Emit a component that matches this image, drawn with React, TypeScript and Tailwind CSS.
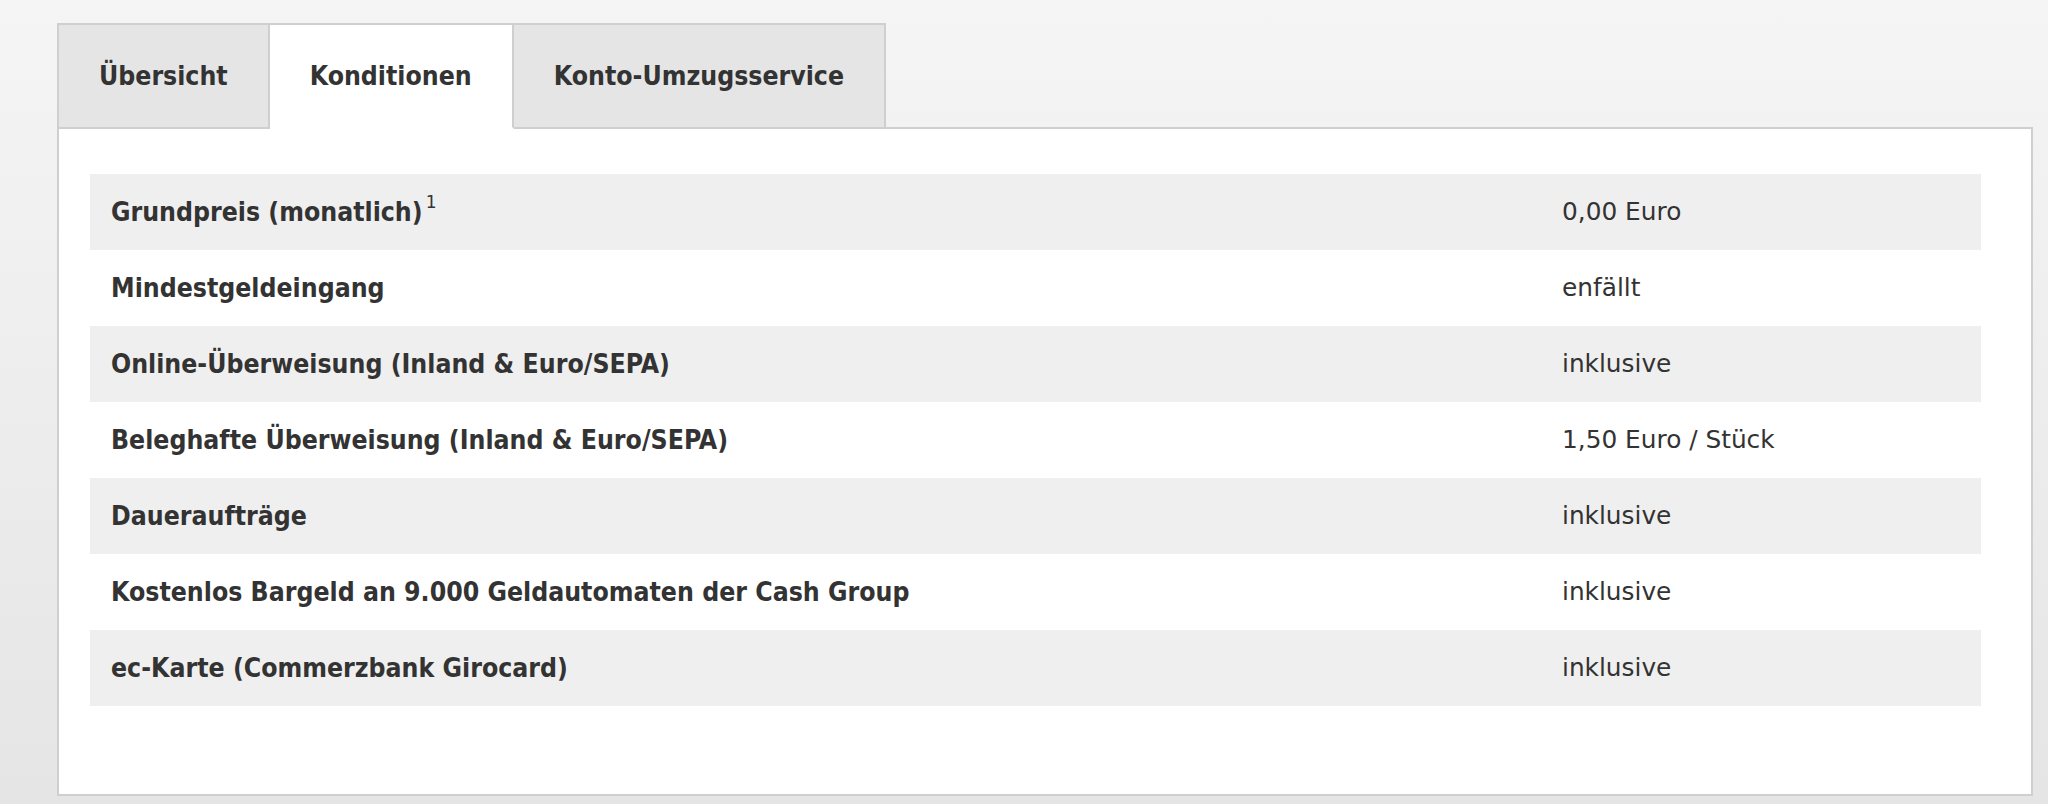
const rows: { label: string; value: string; sup?: string }[] = [
  { label: "Grundpreis (monatlich)", value: "0,00 Euro", sup: "1" },
  { label: "Mindestgeldeingang", value: "enfällt" },
  { label: "Online-Überweisung (Inland & Euro/SEPA)", value: "inklusive" },
  { label: "Beleghafte Überweisung (Inland & Euro/SEPA)", value: "1,50 Euro / Stück" },
  { label: "Daueraufträge", value: "inklusive" },
  { label: "Kostenlos Bargeld an 9.000 Geldautomaten der Cash Group", value: "inklusive" },
  { label: "ec-Karte (Commerzbank Girocard)", value: "inklusive" },
];

const tabs = ["Übersicht", "Konditionen", "Konto-Umzugsservice"];

export default function App() {
  return (
    <div className="min-h-[804px] w-[2048px] bg-gradient-to-b from-[#f5f5f5] to-[#e5e5e5] pl-[57px] pr-[15px] pt-[23px] text-[#333] font-['DejaVu_Sans_Condensed','DejaVu_Sans',sans-serif]">
      {/* tabs overlap the panel's top border */}
      <div className="relative z-10 -mb-[2px] flex">
        {tabs.map((t, i) => (
          <div
            key={t}
            className={
              "flex h-[106px] items-center border-2 border-[#cfcfcf] px-[40px] text-[26.4px] font-bold " +
              (i > 0 ? "border-l-0 " : "") +
              (i === 1 ? "border-b-white bg-white" : "bg-[#e5e5e5]")
            }
          >
            {t}
          </div>
        ))}
      </div>
      <div className="h-[669px] border-2 border-[#cfcfcf] bg-white pl-[31px] pr-[50px] pt-[45px]">
        <div className="flex flex-col">
          {rows.map((r, i) => (
            <div
              key={r.label}
              className={
                "grid h-[76px] grid-cols-[1451px_1fr] items-center " +
                (i % 2 === 0 ? "bg-[#efefef]" : "bg-white")
              }
            >
              <div className="pl-[21px] text-[26.4px] font-bold">
                {r.label}
                {r.sup && (
                  <sup className="relative -top-[13px] ml-[3px] font-['DejaVu_Sans',sans-serif] text-[17px] font-normal">
                    {r.sup}
                  </sup>
                )}
              </div>
              <div className="pl-[21px] font-['DejaVu_Sans',sans-serif] text-[24.8px]">{r.value}</div>
            </div>
          ))}
        </div>
      </div>
    </div>
  );
}
